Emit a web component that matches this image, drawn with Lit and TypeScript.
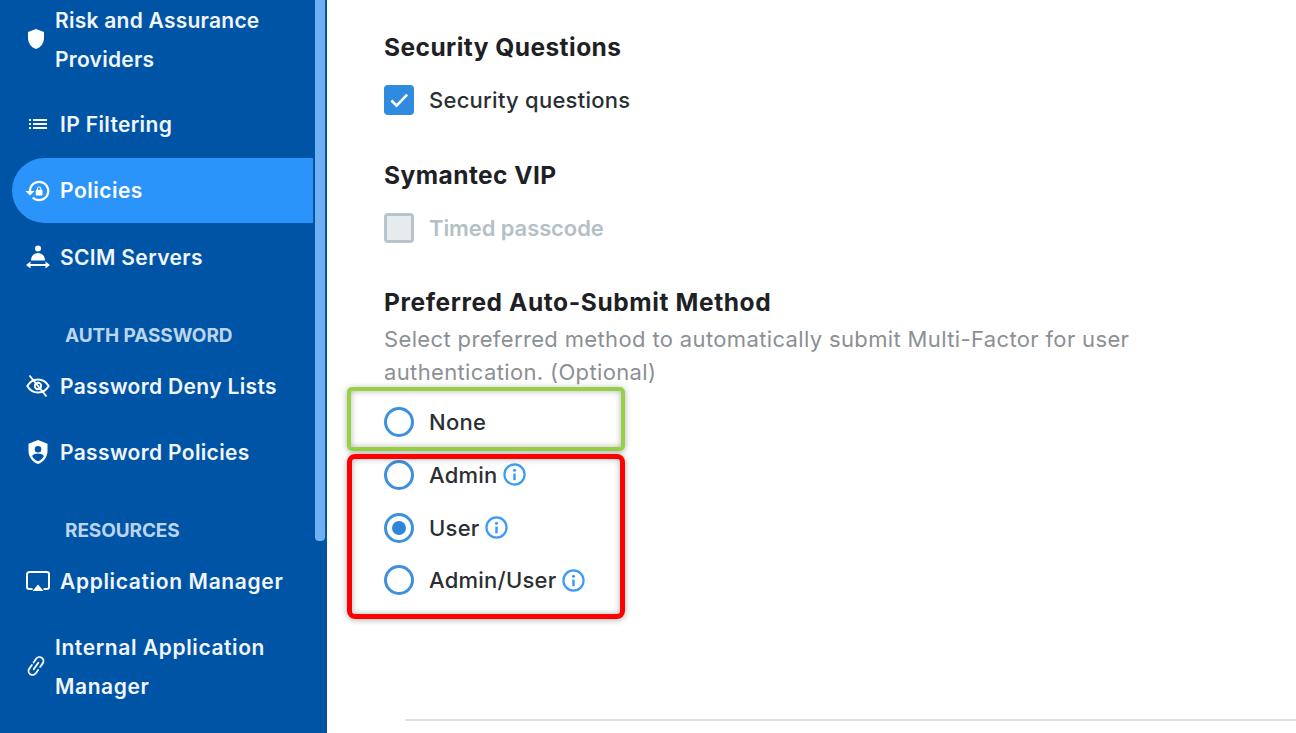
import { LitElement, html, css, svg } from "lit";
import { customElement } from "lit/decorators.js";

const icons: Record<string, unknown> = {
  shield: svg`<path fill="#fff" d="M12 2 4 5v6.100c0 5 3.400 9.700 8 10.900 4.600-1.200 8-5.900 8-10.900V5z"/>`,
  list: svg`<path fill="#fff" d="M3 13h2v-2H3zm0 4h2v-2H3zm0-8h2V7H3zm4 4h14v-2H7zm0 4h14v-2H7zM7 7v2h14V7z"/>`,
  policy: svg`<path transform="translate(-1.700 -1.700) scale(1.140)" fill="#fff" d="M13,3c-4.970,0-9,4.030-9,9H1l4,4l4-4H6c0-3.860,3.140-7,7-7s7,3.140,7,7s-3.140,7-7,7c-1.900,0-3.620-0.760-4.880-1.990L6.700,18.420C8.320,20.010,10.550,21,13,21c4.970,0,9-4.030,9-9S17.970,3,13,3z M15,11v-1c0-1.100-0.900-2-2-2s-2,0.900-2,2v1c-0.550,0-1,0.450-1,1v3c0,0.550,0.450,1,1,1h4c0.550,0,1-0.450,1-1v-3C16,11.450,15.550,11,15,11z M14,11h-2v-1c0-0.550,0.450-1,1-1s1,0.450,1,1V11z"/>`,
  scim: svg`<circle cx="12" cy="3.500" r="3" fill="#fff"/><path fill="#fff" d="M5 15.500c0-5 3.500-7.500 7-7.500s7 2.500 7 7.500z"/><path fill="none" stroke="#fff" stroke-width="2" d="M3 20h18"/><path fill="#fff" d="M0 20l4.500-3.500v7zm24 0-4.500-3.500v7z"/>`,
  eye: svg`<path fill="none" stroke="#fff" stroke-width="1.900" d="M1.300 12C3.900 7.500 7.800 5.500 12 5.500s8.100 2 10.700 6.500c-2.600 4.500-6.500 6.500-10.700 6.500S3.900 16.500 1.300 12z"/><circle cx="12" cy="12" r="3.200" fill="none" stroke="#fff" stroke-width="1.900"/><path stroke="#fff" stroke-width="1.900" d="M3.500 1.500 20.500 22.500"/>`,
  pw: svg`<path fill="#fff" fill-rule="evenodd" d="M12 0 2.500 3.800v7.300C2.500 17 6.500 22.400 12 24c5.500-1.600 9.500-7 9.500-12.900V3.800zM12 6a3.300 3.300 0 1 1 0 6.600A3.300 3.300 0 0 1 12 6zm0 15.300c-2.600-.9-4.800-2.900-5.900-5.300 1.300-1.600 3.600-2.400 5.900-2.400s4.600.8 5.900 2.400c-1.100 2.400-3.300 4.400-5.900 5.300z"/>`,
  air: svg`<path fill="none" stroke="#fff" stroke-width="2" d="M6.500 20H3.300A2.300 2.300 0 0 1 1 17.700V5.300A2.300 2.300 0 0 1 3.300 3h17.400A2.300 2.300 0 0 1 23 5.300v12.400a2.300 2.300 0 0 1-2.300 2.300h-3.200"/><path fill="#fff" d="M12 15.500 17.500 22h-11z"/>`,
  link: svg`<g fill="none" stroke="#fff" stroke-width="1.800" stroke-linecap="round" transform="rotate(-55 12 12)"><path d="M10.500 8H6a4 4 0 0 0 0 8h4"/><path d="M13.500 8H18a4 4 0 0 1 0 8h-4.500"/><path d="M8 12h8"/></g>`,
};

const icon = (n: string, cls = "") =>
  html`<svg class="ico ${cls}" viewBox="0 0 24 24">${icons[n]}</svg>`;

const info = html`<svg class="info" viewBox="0 0 24 24">
  <circle cx="12" cy="12" r="10.500" fill="none" stroke="#3d9bf5" stroke-width="2.300"/>
  <circle cx="12" cy="7.500" r="1.600" fill="#3d9bf5"/>
  <path d="M12 11v7" stroke="#3d9bf5" stroke-width="2.600"/>
</svg>`;

@customElement("app-root")
export class AppRoot extends LitElement {
  static styles = css`
    :host {
      display: block;
      width: 1296px;
      height: 733px;
      overflow: hidden;
      position: relative;
      background: #fff;
      font-family: Inter, "Noto Sans", sans-serif;
    }
    .page { display: flex; height: 733px; }
    .side {
      width: 327px;
      flex: none;
      background: #0054a6;
      color: #f1f6fb;
      position: relative;
      font-weight: 600;
      font-size: 21px;
      letter-spacing: 0.35px;
      overflow: hidden;
    }
    .nav { width: 313px; display: flex; flex-direction: column; }
    .thumb {
      position: absolute;
      left: 315px;
      top: 0;
      width: 10px;
      height: 541px;
      background: #6fb0f3;
      border-radius: 0 0 4px 4px;
    }
    .item {
      display: flex;
      align-items: center;
      height: 66px;
      padding-left: 26px;
      box-sizing: border-box;
    }
    .item.two {
      height: 80px;
      line-height: 39px;
      padding-left: 24px;
      margin-bottom: 11px;
      letter-spacing: 0.25px;
    }
    .item.two.last { margin-top: 13px; margin-bottom: 0; letter-spacing: 0.6px; }
    .item.two .ico { width: 24px; height: 24px; margin: 0 7px 2px 0; flex: none; }
    .item.active {
      background: #2a94fb;
      border-radius: 33px 0 0 33px;
      margin: 1px 0 1px 12px;
      padding-left: 14px;
      color: #fff;
      height: 65px;
      letter-spacing: 0.5px;
    }
    .item.wide { letter-spacing: 0.65px; }
    .ico { width: 24px; height: 24px; margin-right: 10px; flex: none; overflow: visible; }
    .head {
      padding-left: 65px;
      font-size: 19px;
      font-weight: 700;
      color: #bcd5ee;
      letter-spacing: -0.1px;
      height: 30px;
      line-height: 30px;
      margin-top: 31px;
      margin-bottom: 2px;
    }

    .main {
      flex: 1;
      padding: 0 0 0 57px;
      position: relative;
      color: #2b2f33;
    }
    h2 {
      margin: 0;
      font-size: 24.500px;
      line-height: 30px;
      font-weight: 700;
      color: #1d2125;
      letter-spacing: 0.45px;
    }
    .h1 { margin-top: 32px; }
    .h2 { margin-top: 45px; }
    .h3 { margin-top: 44px; letter-spacing: 0.6px; }
    .opt {
      display: flex;
      align-items: center;
      font-size: 22px;
      font-weight: 500;
      letter-spacing: 0.25px;
      height: 30px;
    }
    .check { margin-top: 23px; }
    .box {
      width: 30px;
      height: 30px;
      box-sizing: border-box;
      border-radius: 4px;
      margin-right: 15px;
      flex: none;
    }
    .box.on { background: #2f8be0; display: flex; align-items: center; justify-content: center; }
    .box.on svg { width: 26px; height: 26px; }
    .box.off { background: #e6ebee; border: 3px solid #b6c5cb; }
    .dis { color: #b3c1c7; font-weight: 600; letter-spacing: -0.1px; }
    .desc {
      margin: 6px 0 0;
      width: 790px;
      font-size: 22px;
      line-height: 33px;
      font-weight: 400;
      color: #8b9095;
      letter-spacing: 0.36px;
    }
    .radios { display: flex; flex-direction: column; margin-top: 18px; }
    .radio { height: 30px; margin-bottom: 22.800px; }
    .circle {
      width: 30px;
      height: 30px;
      box-sizing: border-box;
      border-radius: 50%;
      border: 3px solid #3d90de;
      margin-right: 15px;
      flex: none;
      display: flex;
      align-items: center;
      justify-content: center;
    }
    .circle i { width: 14px; height: 14px; border-radius: 50%; background: #2f85d8; }
    .info { width: 23px; height: 23px; margin-left: 5px; }
    .rule {
      position: absolute;
      left: 78px;
      right: 0;
      top: 719px;
      height: 2px;
      background: #dedfe0;
    }
    .mark {
      position: absolute;
      left: 347px;
      width: 278px;
      box-sizing: border-box;
      box-shadow: 0 1px 6px rgba(0, 0, 0, 0.3), inset 0 0 6px rgba(0, 0, 0, 0.3);
      pointer-events: none;
    }
    .green { top: 387px; height: 64px; border: 4px solid #96d045; border-radius: 5px; }
    .red { top: 454px; height: 165px; border: 5px solid #ff0000; border-radius: 8px; }
  `;

  render() {
    return html`
      <div class="page">
        <aside class="side">
          <nav class="nav">
            <div class="item two">${icon("shield")}<span>Risk and Assurance<br />Providers</span></div>
            <div class="item">${icon("list")}IP Filtering</div>
            <div class="item active">${icon("policy")}Policies</div>
            <div class="item">${icon("scim")}SCIM Servers</div>
            <div class="head">AUTH PASSWORD</div>
            <div class="item">${icon("eye")}Password Deny Lists</div>
            <div class="item">${icon("pw")}Password Policies</div>
            <div class="head">RESOURCES</div>
            <div class="item wide">${icon("air")}Application Manager</div>
            <div class="item two last">${icon("link")}<span>Internal Application<br />Manager</span></div>
          </nav>
          <div class="thumb"></div>
        </aside>
        <main class="main">
          <h2 class="h1">Security Questions</h2>
          <div class="opt check">
            <span class="box on"><svg viewBox="0 0 24 24"><path d="M5 12.500l4.800 4.800L19.500 7" fill="none" stroke="#fff" stroke-width="2.400"/></svg></span>
            Security questions
          </div>
          <h2 class="h2">Symantec VIP</h2>
          <div class="opt check dis"><span class="box off"></span>Timed passcode</div>
          <h2 class="h3">Preferred Auto-Submit Method</h2>
          <p class="desc">Select preferred method to automatically submit Multi-Factor for user authentication. (Optional)</p>
          <div class="radios">
            <div class="opt radio"><span class="circle"></span>None</div>
            <div class="opt radio"><span class="circle"></span>Admin${info}</div>
            <div class="opt radio"><span class="circle"><i></i></span>User${info}</div>
            <div class="opt radio"><span class="circle"></span>Admin/User${info}</div>
          </div>
          <div class="rule"></div>
        </main>
      </div>
      <div class="mark green"></div>
      <div class="mark red"></div>
    `;
  }
}
